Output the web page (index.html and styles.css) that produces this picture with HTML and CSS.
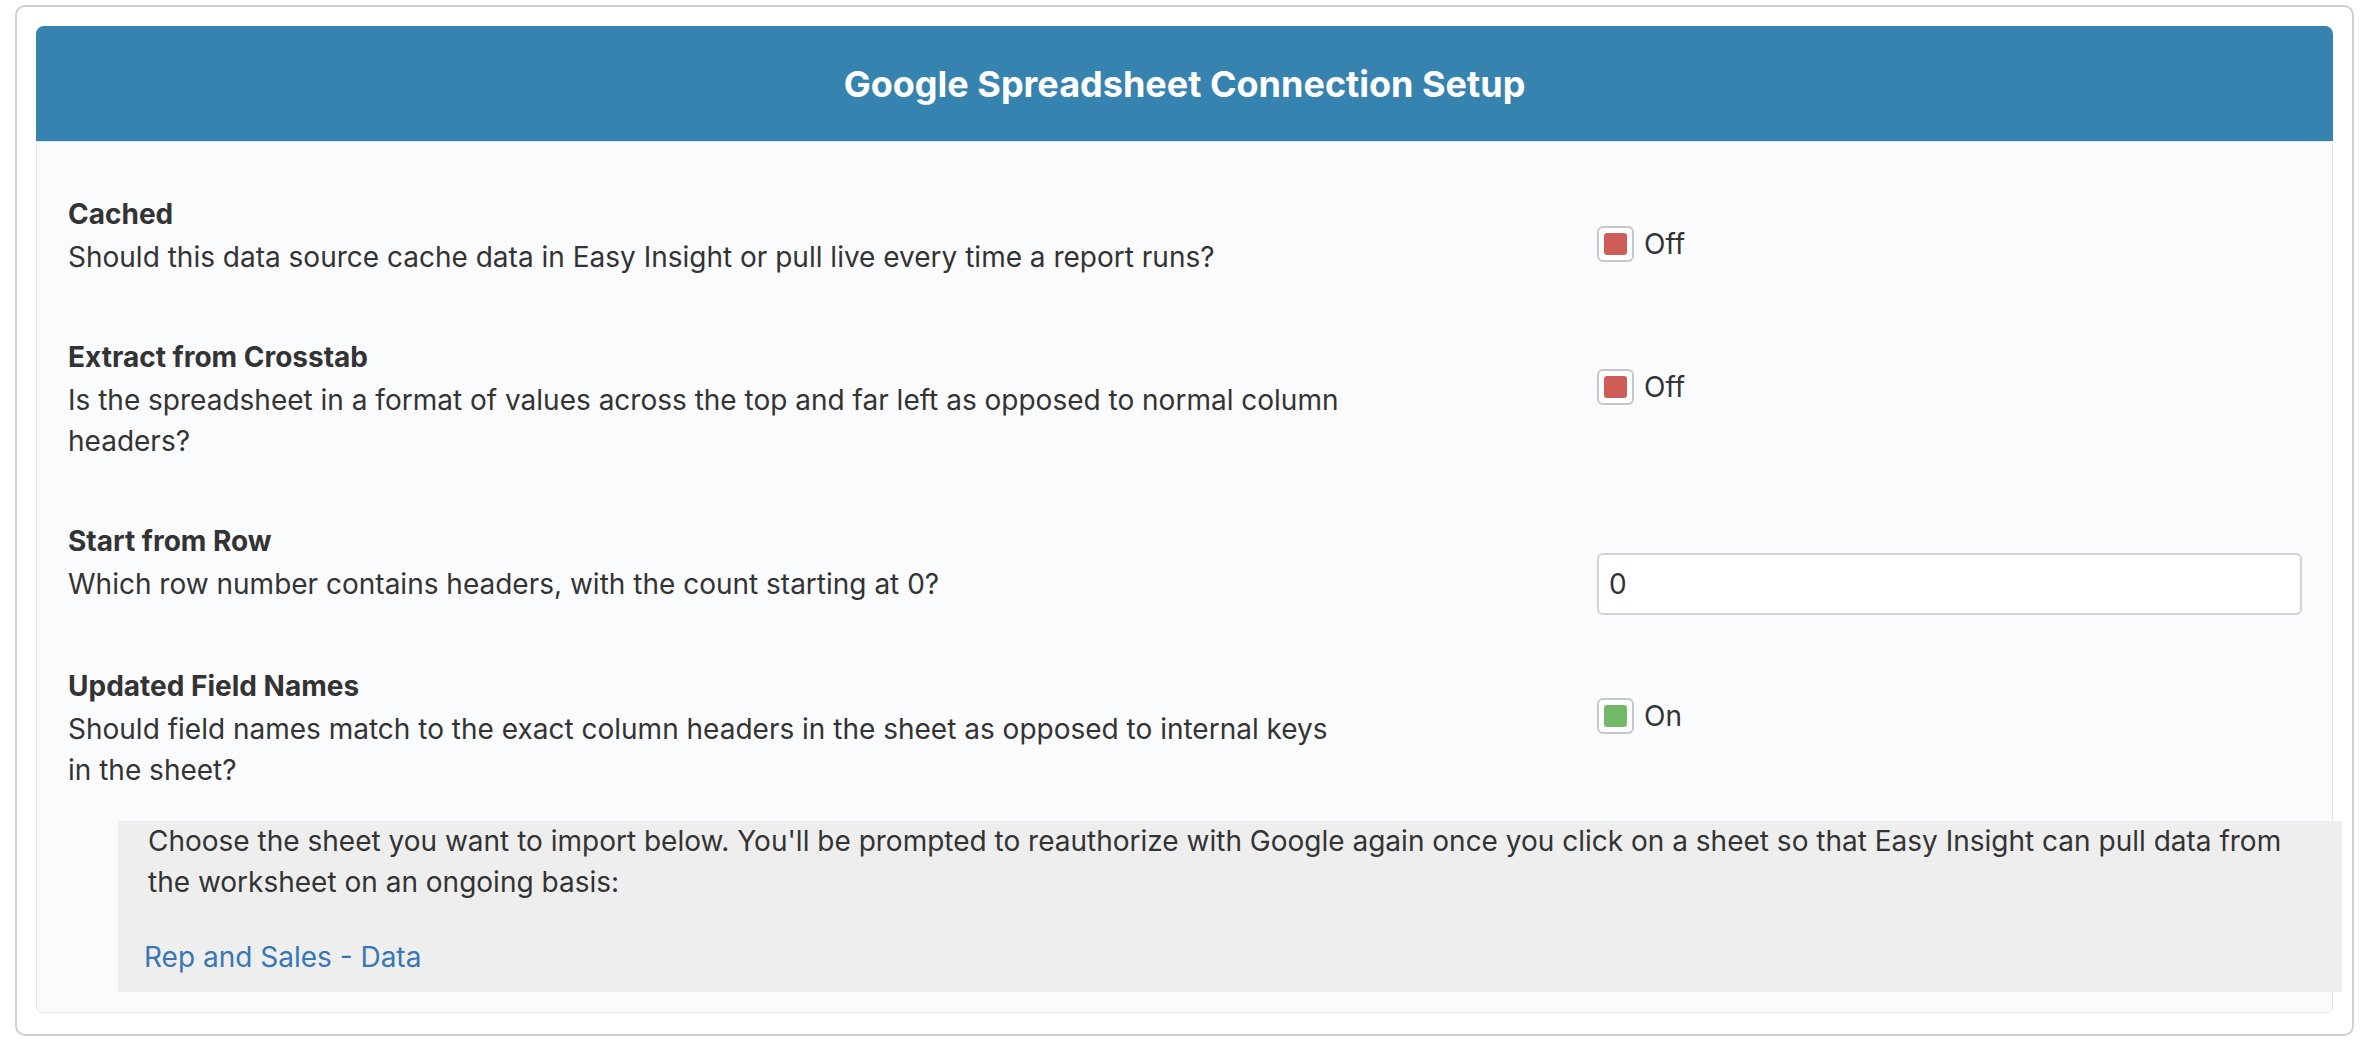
FILE: index.html
```html
<!DOCTYPE html>
<html lang="en">
<head>
<meta charset="utf-8">
<title>Google Spreadsheet Connection Setup</title>
<link rel="stylesheet" href="styles.css">
</head>
<body>
<div class="frame">
  <div class="card-header">
    <h1 class="title">Google Spreadsheet Connection Setup</h1>
  </div>
  <div class="panel">
    <div class="setting">
      <div class="setting-text">
        <div class="label">Cached</div>
        <p class="desc">Should this data source cache data in Easy Insight or pull live every time a report runs?</p>
      </div>
      <div class="setting-control">
        <label class="toggle"><span class="toggle-box"><span class="toggle-fill off"></span></span><span class="toggle-text">Off</span></label>
      </div>
    </div>
    <div class="setting">
      <div class="setting-text">
        <div class="label">Extract from Crosstab</div>
        <p class="desc">Is the spreadsheet in a format of values across the top and far left as opposed to normal column headers?</p>
      </div>
      <div class="setting-control">
        <label class="toggle"><span class="toggle-box"><span class="toggle-fill off"></span></span><span class="toggle-text">Off</span></label>
      </div>
    </div>
    <div class="setting">
      <div class="setting-text">
        <div class="label">Start from Row</div>
        <p class="desc">Which row number contains headers, with the count starting at 0?</p>
      </div>
      <div class="setting-control">
        <input class="text-input" type="text" value="0">
      </div>
    </div>
    <div class="setting setting-last">
      <div class="setting-text">
        <div class="label">Updated Field Names</div>
        <p class="desc">Should field names match to the exact column headers in the sheet as opposed to internal keys in the sheet?</p>
      </div>
      <div class="setting-control">
        <label class="toggle"><span class="toggle-box"><span class="toggle-fill on"></span></span><span class="toggle-text">On</span></label>
      </div>
    </div>
    <div class="sheet-box">
      <p class="sheet-intro">Choose the sheet you want to import below. You'll be prompted to reauthorize with Google again once you click on a sheet so that Easy Insight can pull data from the worksheet on an ongoing basis:</p>
      <div class="sheet-list"><a class="sheet-link" href="#">Rep and Sales - Data</a></div>
    </div>
  </div>
</div>
</body>
</html>
```

FILE: styles.css
```css
html, body {
  margin: 0;
  padding: 0;
  background: #ffffff;
}

body {
  font-family: Inter, "Noto Sans", sans-serif;
  font-size: 28px;
  color: #333333;
  padding: 5px 18px 0 15px;
}

.frame {
  border: 2px solid #cfcfcf;
  border-radius: 10px;
  padding: 19px 19px 21px 19px;
}

.card-header {
  background: #3783b0;
  border-radius: 8px 8px 0 0;
  height: 115px;
  display: flex;
  align-items: center;
  justify-content: center;
}

.title {
  margin: 0;
  color: #ffffff;
  font-size: 36px;
  font-weight: 700;
}

.panel {
  background: #fafbfd;
  border: 1px solid #e4e6e9;
  border-radius: 0 0 6px 6px;
  padding: 52px 30px 20px 31px;
}

.setting {
  display: flex;
  padding-bottom: 51px;
}

.setting-last {
  padding-bottom: 22px;
}

.setting-text {
  flex: 1;
}

.label {
  font-weight: 700;
  line-height: 41px;
  margin-bottom: 2px;
}

.desc {
  margin: 0 0 8px 0;
  line-height: 41px;
  max-width: 1280px;
}

.setting-control {
  width: 705px;
  margin-top: 32px;
}

.toggle {
  display: flex;
  align-items: center;
  height: 36px;
}

.toggle-box {
  width: 33px;
  height: 32px;
  border: 2px solid #c3c8cd;
  border-radius: 6px;
  background: #ffffff;
  display: flex;
  align-items: center;
  justify-content: center;
}

.toggle-fill {
  width: 23px;
  height: 22px;
  border-radius: 3px;
}

.toggle-fill.off {
  background: #cd5d56;
}

.toggle-fill.on {
  background: #72b866;
}

.toggle-text {
  margin-left: 10px;
  line-height: 36px;
}

.text-input {
  box-sizing: border-box;
  width: 705px;
  height: 62px;
  border: 2px solid #d2d2d2;
  border-radius: 6px;
  background: #ffffff;
  padding: 0 10px;
  font-family: inherit;
  font-size: 28px;
  color: #333333;
  display: block;
}

.sheet-box {
  background: #eeeeee;
  margin: 0 -40px 0 50px;
  padding: 0 30px 14px 26px;
}

.sheet-intro {
  margin: 0 0 34px 0;
  padding-left: 4px;
  line-height: 41px;
}

.sheet-list {
  line-height: 41px;
}

.sheet-link {
  color: #3876b5;
  text-decoration: none;
}
```
